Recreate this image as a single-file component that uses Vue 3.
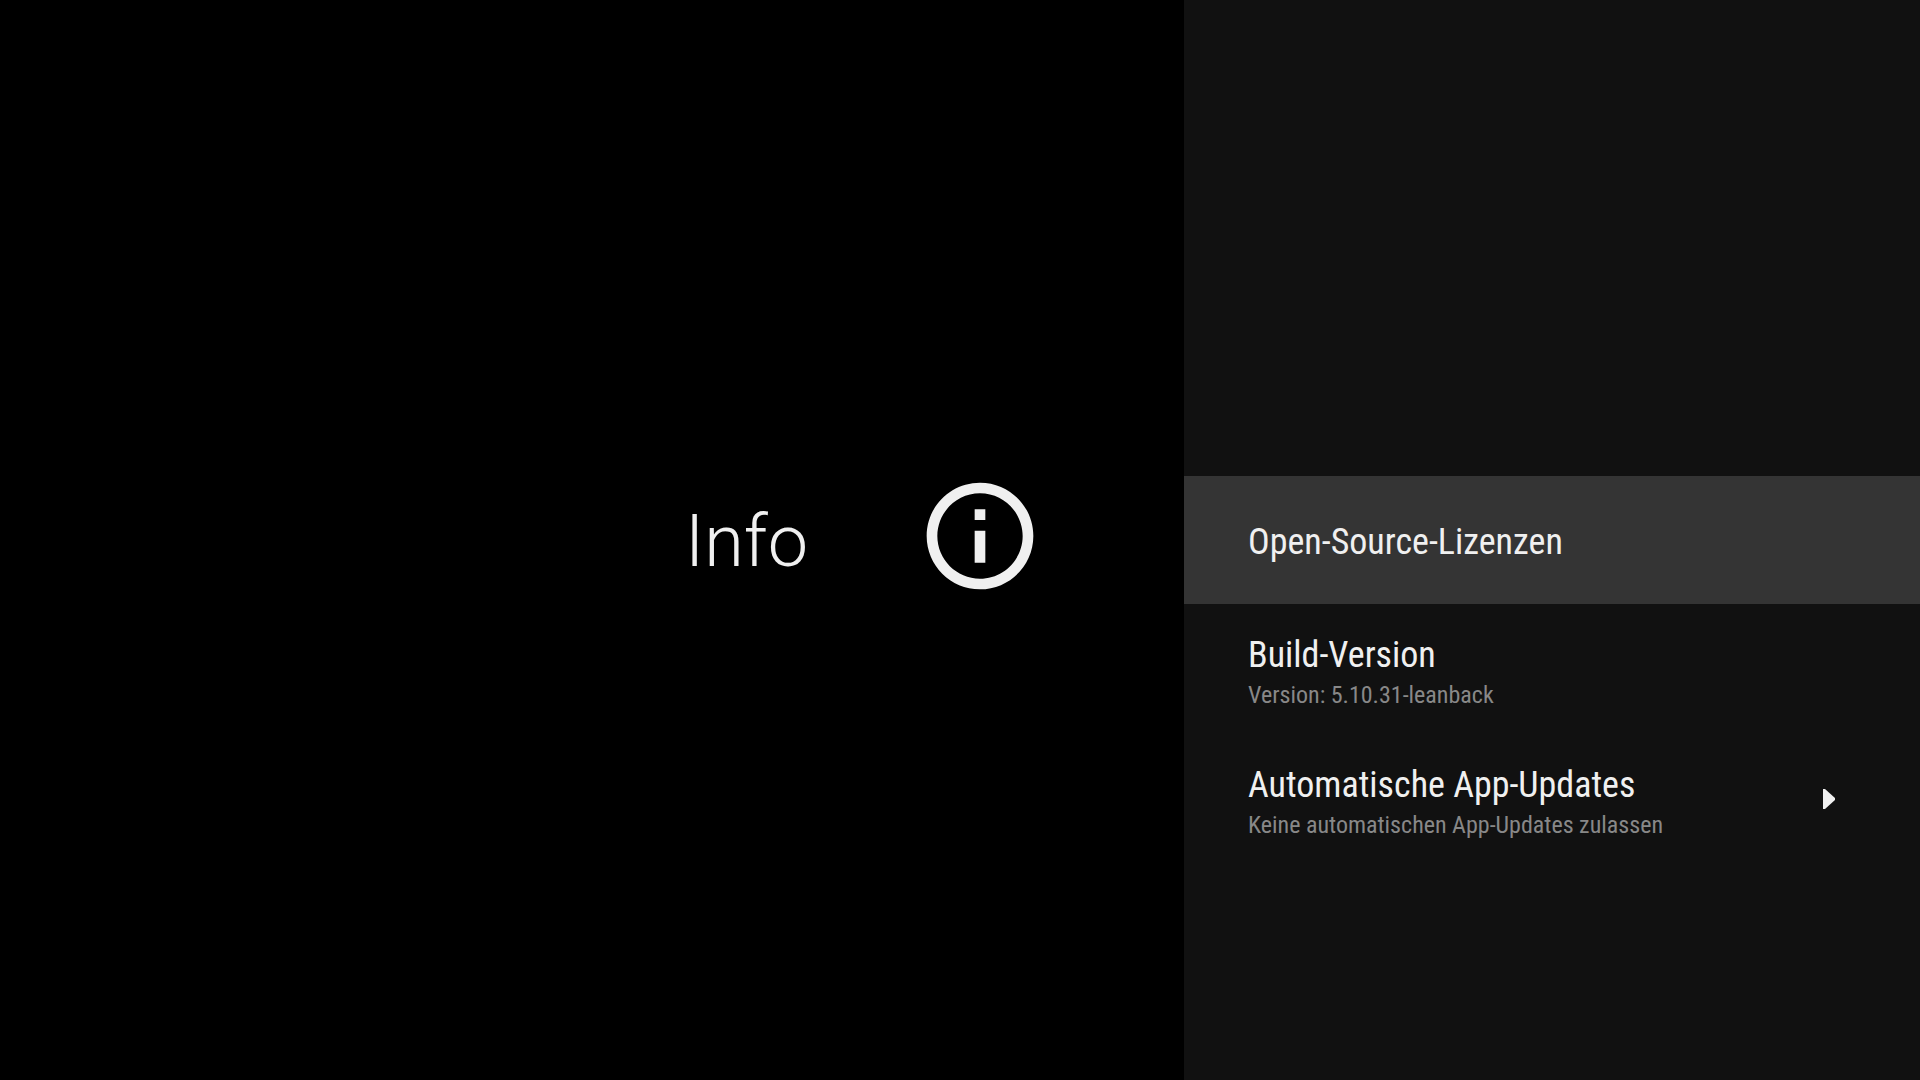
<script setup>
const items = [
  { title: 'Open-Source-Lizenzen', focused: true },
  { title: 'Build-Version', note: 'Version: 5.10.31-leanback' },
  { title: 'Automatische App-Updates', note: 'Keine automatischen App-Updates zulassen', more: true },
]
</script>

<template>
  <main class="screen">
    <section class="guide">
      <h1>Info</h1>
      <svg class="info" viewBox="0 0 24 24" aria-hidden="true">
        <path d="M11 7h2v2h-2zm0 4h2v6h-2zm1-9C6.48 2 2 6.48 2 12s4.480 10 10 10 10-4.480 10-10S17.520 2 12 2zm0 18c-4.410 0-8-3.590-8-8s3.590-8 8-8 8 3.590 8 8-3.590 8-8 8z" />
      </svg>
    </section>
    <nav class="actions">
      <button v-for="item in items" :key="item.title" type="button" class="action" :class="{ focused: item.focused, detailed: item.note }">
        <span class="label">
          <span class="title">{{ item.title }}</span>
          <span v-if="item.note" class="note">{{ item.note }}</span>
        </span>
        <svg v-if="item.more" class="arrow" viewBox="0 0 12 20" aria-hidden="true">
          <path d="M0 0h2l10 9v2l-10 9H0z" />
        </svg>
      </button>
    </nav>
  </main>
</template>

<style>
body {
  background: #000;
}
</style>

<style scoped>
.screen {
  display: flex;
  min-height: 100vh;
  color: #f0f0f0;
  font-family: "Roboto Condensed", Roboto, sans-serif;
}
.guide {
  flex: 1;
  display: flex;
  align-items: center;
  justify-content: flex-end;
  gap: 108px;
  padding-right: 140px;
}
h1 {
  margin: 0;
  padding-top: 4px;
  font: 300 72px/84px Roboto, sans-serif;
}
svg {
  fill: #f0f0f0;
}
.info {
  width: 128px;
  height: 128px;
  margin-bottom: 8px;
}
.actions {
  width: 736px;
  box-sizing: border-box;
  padding-top: 476px;
  background: #111;
}
.action {
  display: flex;
  align-items: center;
  justify-content: space-between;
  width: 100%;
  min-height: 128px;
  padding: 0 85px 0 64px;
  border: 0;
  background: none;
  color: inherit;
  font: inherit;
  text-align: left;
}
.detailed {
  min-height: 130px;
}
.focused {
  background: #343434;
}
.label {
  display: flex;
  flex-direction: column;
  padding-top: 4px;
}
.title {
  font-size: 36px;
  line-height: 48px;
}
.note {
  font-size: 24px;
  line-height: 32px;
  color: #888;
}
.arrow {
  width: 12px;
  height: 20px;
}
</style>
